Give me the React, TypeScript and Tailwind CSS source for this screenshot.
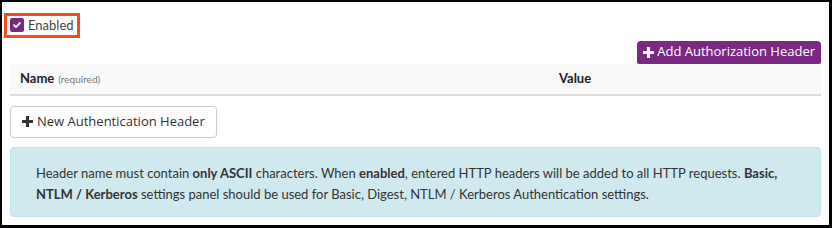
import React from 'react';

const Plus = () => (
  <svg viewBox="0 0 10 10" className="w-[11px] h-[11px]" fill="currentColor">
    <path d="M3.6 0h2.8v3.6H10v2.8H6.4V10H3.6V6.4H0V3.6h3.6z" />
  </svg>
);

export default function App() {
  return (
    <div className="w-[832px] h-[228px] bg-white border-2 border-black border-r-[3px] border-b-[3px] font-['Lato','Noto_Sans',sans-serif] text-[#333]">
      <div className="pt-[10px] pl-[2px]">
        <label className="inline-flex items-center gap-[4px] border-[3px] border-[#f64b1c] pl-[3px] pr-[3px] h-[25px]">
          <span className="w-[14px] h-[14px] rounded-[2px] bg-[#7b2882] flex items-center justify-center">
            <svg viewBox="0 0 12 12" className="w-[10px] h-[10px]" fill="none" stroke="white" strokeWidth={2.2} strokeLinecap="round" strokeLinejoin="round">
              <path d="M2.5 6.3l2.3 2.3 4.7-5" />
            </svg>
          </span>
          <span className="text-[13px] text-[#444] leading-none">Enabled</span>
        </label>
      </div>

      <div className="px-[8px]">
        <div className="flex justify-end mt-[3px]">
          <button className="flex items-center gap-[3px] h-[23px] px-[6px] rounded-t-[4px] rounded-b-[2px] bg-[#7b2882] text-white text-[13px] font-['Open_Sans',sans-serif]">
            <Plus />
            Add Authorization Header
          </button>
        </div>

        <div className="flex h-[32px] items-center bg-[#f9f9f9] border-b-2 border-[#dcdcdc]">
          <div className="w-[549px] pl-[10px] flex items-baseline gap-[4px]">
            <span className="text-[13px] font-bold text-[#222]">Name</span>
            <span className="text-[10px] text-[#777]">(required)</span>
          </div>
          <div className="text-[13px] font-bold text-[#222]">Value</div>
        </div>

        <button className="mt-[10px] flex items-center gap-[4px] h-[32px] px-[11px] border border-[#ccc] rounded-[4px] bg-white text-[13px] text-[#333] font-['Open_Sans',sans-serif]">
          <Plus />
          New Authentication Header
        </button>

        <div className="mt-[9px] h-[70px] bg-[#d0e9ee] border border-[#bfe3ea] rounded-[4px] pl-[25px] pr-[28px] pt-[15px] text-[13px] leading-[21px] text-[#333]">
          Header name must contain <b>only ASCII</b> characters. When <b>enabled</b>, entered HTTP headers will be added to all HTTP requests. <b>Basic, NTLM / Kerberos</b> settings panel should be used for Basic, Digest, NTLM / Kerberos Authentication settings.
        </div>
      </div>
    </div>
  );
}
